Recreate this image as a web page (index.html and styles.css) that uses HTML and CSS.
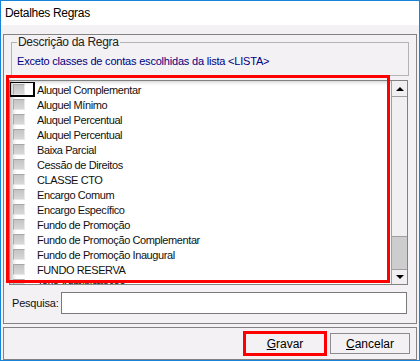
FILE: index.html
```
<!DOCTYPE html>
<html lang="pt-BR">
<head>
  <meta charset="UTF-8">
  <title>Detalhes Regras</title>
  <link rel="stylesheet" href="styles.css">
</head>
<body>

  <div class="window">
    <div class="titlebar">Detalhes Regras</div>

    <div class="panel">
      <fieldset class="group">
        <legend>Descrição da Regra</legend>
        <div class="desc">Exceto classes de contas escolhidas da lista &lt;LISTA&gt;</div>
      </fieldset>

      <div class="listbox">
        <ul class="items">
          <li><span class="cell focus"><span class="check"></span></span>Aluquel Complementar</li>
          <li><span class="cell"><span class="check"></span></span>Aluguel Mínimo</li>
          <li><span class="cell"><span class="check"></span></span>Aluquel Percentual</li>
          <li><span class="cell"><span class="check"></span></span>Aluquel Percentual</li>
          <li><span class="cell"><span class="check"></span></span>Baixa Parcial</li>
          <li><span class="cell"><span class="check"></span></span>Cessão de Direitos</li>
          <li><span class="cell"><span class="check"></span></span>CLASSE CTO</li>
          <li><span class="cell"><span class="check"></span></span>Encargo Comum</li>
          <li><span class="cell"><span class="check"></span></span>Encargo Específico</li>
          <li><span class="cell"><span class="check"></span></span>Fundo de Promoção</li>
          <li><span class="cell"><span class="check"></span></span>Fundo de Promoção Complementar</li>
          <li><span class="cell"><span class="check"></span></span>Fundo de Promoção Inaugural</li>
          <li><span class="cell"><span class="check"></span></span>FUNDO RESERVA</li>
          <li><span class="cell"><span class="check"></span></span>Taxa Administração</li>
        </ul>
        <div class="scrollbar">
          <div class="arrow up"></div>
          <div class="track"></div>
          <div class="thumb"></div>
          <div class="arrow down"></div>
        </div>
        <!-- red annotation box drawn over the list -->
        <div class="mark"></div>
      </div>

      <div class="search">
        <label for="pesquisa">Pesquisa:</label>
        <input type="text" id="pesquisa">
      </div>
    </div>

    <div class="buttonbar">
      <button class="btn marked"><u>G</u>ravar</button>
      <button class="btn"><u>C</u>ancelar</button>
    </div>
  </div>

</body>
</html>
```

FILE: styles.css
```
body {
  margin: 0;
  font-family: 'Liberation Sans', Arial, sans-serif;
  font-size: 11px;
  color: #111;
}

.window {
  width: 420px;
  height: 361px;
  box-sizing: border-box;
  border: 1px solid #1883d7;
  background-color: #f4f1f4;
}

.titlebar {
  height: 24px;
  line-height: 24px;
  padding-left: 4px;
  background-color: #fff;
  font-size: 12px;
  letter-spacing: -0.3px;
  color: #000;
}

.panel {
  margin: 9px 2px 0 2px;
  height: 290px;
  box-sizing: border-box;
  border: 1px solid #828282;
  padding: 0 7px 0 5px;
}

.group {
  margin: 0 0 0 2px;
  padding: 5px 5px 7px 5px;
  border: 1px solid #b4b4b4;
}

.group legend {
  padding: 0 1px;
  line-height: 14px;
  font-size: 12px;
  letter-spacing: -0.3px;
  color: #222;
}

.desc {
  line-height: 14px;
  color: #000080;
  letter-spacing: -0.2px;
}

.listbox {
  position: relative;
  display: flex;
  height: 205px;
  box-sizing: border-box;
  margin: 4px 1px 0 0;
  border: 1px solid #828282;
  background-color: #fff;
}

.items {
  flex: 1;
  list-style-type: none;
  margin: 0;
  padding: 1px 0 0 0;
  overflow: hidden;
  box-shadow: inset 5px 3px 5px -3px rgba(0, 0, 0, 0.3);
}

.items li {
  display: flex;
  align-items: center;
  height: 15px;
  letter-spacing: -0.4px;
  white-space: nowrap;
}

.cell {
  display: flex;
  align-items: center;
  width: 25px;
  height: 15px;
  box-sizing: border-box;
  padding-left: 3px;
  margin-right: 2px;
}

.cell.focus {
  border: 1px solid #000;
  border-right-width: 2px;
  border-bottom-width: 2px;
  padding-left: 2px;
}

.check {
  width: 12px;
  height: 11px;
  box-sizing: border-box;
  border: 1px solid #a8a8a8;
  border-right-color: #e8e8e8;
  border-bottom-color: #e8e8e8;
  background: linear-gradient(#c4c4c4, #d8d8d8);
}

.scrollbar {
  width: 15px;
  display: flex;
  flex-direction: column;
  border-left: 1px solid #a0a0a0;
  background-color: #f2eff2;
}

.arrow {
  height: 16px;
  box-sizing: border-box;
  display: flex;
  align-items: center;
  justify-content: center;
}

.arrow.up {
  border-bottom: 1px solid #a0a0a0;
}

.arrow.down {
  height: 15px;
  border-top: 1px solid #a0a0a0;
}

.arrow.up::after {
  content: "";
  border-left: 4px solid transparent;
  border-right: 4px solid transparent;
  border-bottom: 4px solid #000;
}

.arrow.down::after {
  content: "";
  border-left: 4px solid transparent;
  border-right: 4px solid transparent;
  border-top: 4px solid #000;
}

.track {
  flex: 1;
}

.thumb {
  height: 33px;
  box-sizing: border-box;
  border-top: 1px solid #a0a0a0;
  background-color: #cdcdcd;
}

.mark {
  position: absolute;
  left: -4px;
  top: -6px;
  width: 384px;
  height: 208px;
  box-sizing: border-box;
  border: 3px solid #ff0000;
}

.search {
  display: flex;
  align-items: center;
  margin-top: 7px;
}

.search label {
  width: 49px;
  padding-left: 3px;
  letter-spacing: -0.2px;
}

.search input {
  width: 346px;
  height: 22px;
  box-sizing: border-box;
  margin: 0;
  border: 1px solid #7a7a7a;
  background-color: #fff;
}

.buttonbar {
  margin: 3px 2px 0 2px;
  height: 33px;
  box-sizing: border-box;
  border: 1px solid #828282;
  display: flex;
  justify-content: flex-end;
  gap: 5px;
  padding: 5px 6px 0 0;
}

.btn {
  width: 80px;
  height: 21px;
  margin: 0;
  padding: 0;
  font-family: 'Liberation Sans', Arial, sans-serif;
  font-size: 12px;
  color: #000;
  background-color: #f4f1f4;
  border: 1px solid #8c8c8c;
}

.btn.marked {
  outline: 3px solid #ff0000;
  outline-offset: -1px;
}
```
